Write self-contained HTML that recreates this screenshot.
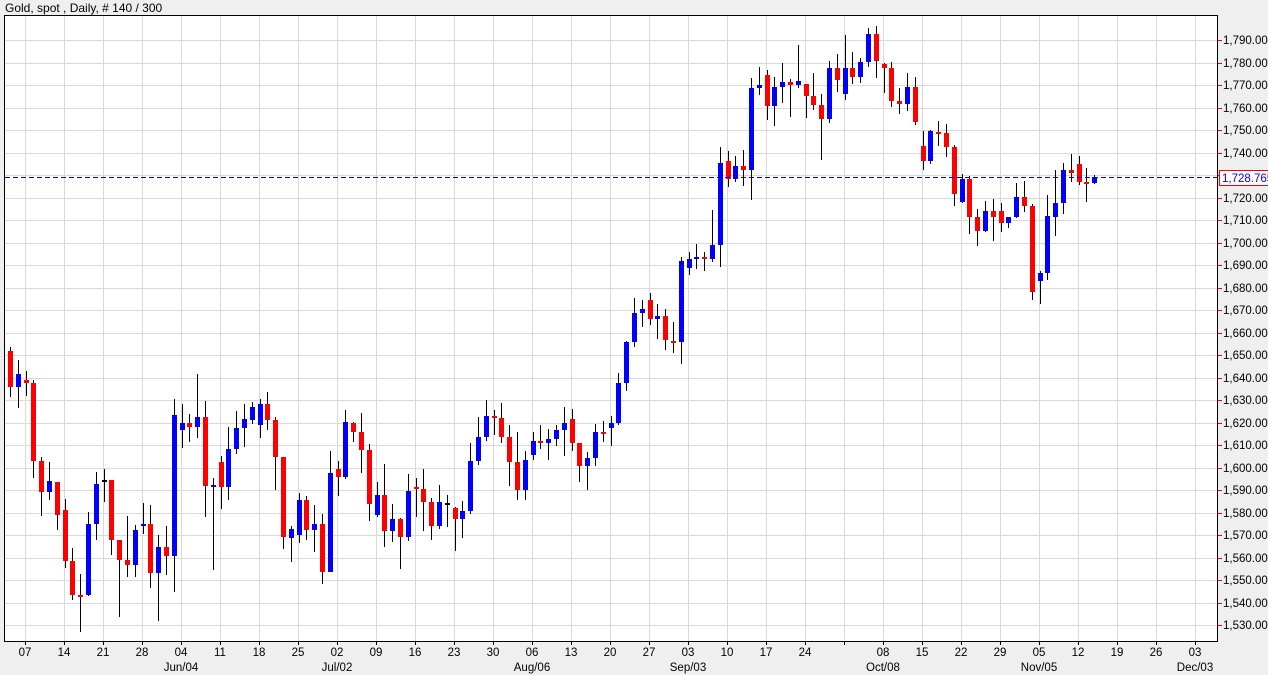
<!DOCTYPE html>
<html><head><meta charset="utf-8"><style>
html,body{margin:0;padding:0;background:#efefef;width:1268px;height:675px;overflow:hidden;font-family:"Liberation Sans",sans-serif}
svg{position:absolute;left:0;top:0}
</style></head><body>
<svg id="s" width="1268" height="675" xmlns="http://www.w3.org/2000/svg" font-family="Liberation Sans, sans-serif">
<rect x="0" y="0" width="1268" height="675" fill="#efefef"/>
<rect x="4.5" y="15.5" width="1213" height="626" fill="#fff" stroke="#000"/>
<g id="grid" stroke="#d9d9d9" stroke-width="1"></g>
<g id="c"></g>
<line x1="5" y1="177.5" x2="1217" y2="177.5" stroke="#0000ff" stroke-dasharray="5,3"/>
<g id="ax" font-size="11.5"></g>
<text x="5" y="12" font-size="12" fill="#000">Gold, spot , Daily, # 140 / 300</text>
<rect x="1219.5" y="170.5" width="50" height="15" fill="#fff" stroke="#f00"/>
<text x="1222" y="182" font-size="11.5" fill="#0000ff">1,728.765</text>
</svg>
<script>
var NS="http://www.w3.org/2000/svg";
function el(p,t,a,txt){var e=document.createElementNS(NS,t);for(var k in a)e.setAttribute(k,a[k]);if(txt)e.textContent=txt;p.appendChild(e);return e;}
var g=document.getElementById('grid'),ax=document.getElementById('ax'),c=document.getElementById('c');
for(var i=0;i<27;i++){var y=40+i*22.5;var yy=Math.round(y)+0.5;
el(g,'line',{x1:5,x2:1217,y1:yy,y2:yy});
el(ax,'line',{x1:1218,x2:1222,y1:yy,y2:yy,stroke:'#f00'});
var v=1790-i*10;el(ax,'text',{x:1223,y:Math.round(y)+4,fill:'#000'},'1,'+String(v).slice(1)+'.000');}
var days=['07','14','21','28','04','11','18','25','02','09','16','23','30','06','13','20','27','03','10','17','24','','08','15','22','29','05','12','19','26','03'];
var mon={4:'Jun/04',8:'Jul/02',13:'Aug/06',17:'Sep/03',22:'Oct/08',26:'Nov/05',30:'Dec/03'};
for(var k=0;k<31;k++){var x=25+k*39;var xx=Math.round(x)+0.5;
if(x<1217)el(g,'line',{x1:xx,x2:xx,y1:16,y2:641});
el(ax,'line',{x1:xx,x2:xx,y1:642,y2:645,stroke:'#000'});
if(days[k])el(ax,'text',{x:x,y:656,'text-anchor':'middle',fill:'#000'},days[k]);
if(mon[k])el(ax,'text',{x:x,y:671,'text-anchor':'middle',fill:'#000'},mon[k]);}
// [color, wickTop, bodyTop, bodyBottom, wickBottom]
var d=[
['r',347,351,387,397],['b',360,374,387,408],['r',371,380,383,396],['r',380,383,461,478],['r',457,461,492,516],['b',462,481,492,500],['r',482,482,515,530],['r',499,510,561,568],['r',548,561,595,600],['r',574,595,596,632],
['b',512,524,595,596],['b',472,484,524,540],['k',469,480,480,502],['r',480,480,540,555],['r',540,540,560,617],['r',516,560,565,577],['b',525,530,565,577],['b',503,524,526,534],['r',505,524,573,588],['b',535,547,573,621],
['r',526,547,556,575],['b',399,415,556,592],['b',404,423,430,448],['r',414,423,427,442],['b',374,417,427,438],['r',401,417,486,517],['b',478,485,486,570],['r',456,462,487,509],['b',427,449,487,500],['b',411,428,449,454],
['b',404,419,428,447],['b',402,407,420,424],['b',399,404,425,438],['r',392,404,420,430],['r',417,420,457,490],['r',457,457,537,549],['b',526,529,538,562],['b',493,500,535,543],['r',496,500,530,540],['b',505,524,530,552],
['r',514,524,572,584],['b',451,473,572,572],['r',461,469,477,496],['b',410,422,477,479],['r',422,423,432,442],['r',413,432,450,473],['r',444,450,504,521],['b',482,495,515,517],['r',464,495,531,547],['b',504,519,531,542],
['r',518,519,537,569],['b',474,491,537,541],['r',478,487,489,517],['r',469,489,502,531],['r',498,502,526,540],['b',485,502,526,529],['k',495,503,503,527],['r',507,508,519,551],['b',501,511,519,538],['b',443,461,511,514],
['b',417,437,461,465],['b',400,416,437,441],['r',410,416,418,435],['r',403,418,437,443],['r',425,437,462,486],['r',432,462,490,500],['b',451,460,490,500],['b',432,441,455,460],['r',425,441,442,449],['b',429,439,443,460],
['b',425,430,439,446],['b',407,423,430,456],['r',409,419,443,451],['r',443,443,466,482],['b',452,458,466,490],['b',424,432,458,466],['r',421,432,433,442],['b',416,423,428,446],['b',373,383,423,425],['b',341,342,383,391],
['b',298,313,342,347],['b',300,309,313,327],['r',293,300,319,325],['b',304,316,319,339],['r',309,316,340,350],['r',322,341,342,353],['b',257,261,342,364],['b',252,259,268,275],['b',244,257,259,269],['r',252,257,259,271],
['b',210,245,259,262],['b',147,163,245,267],['r',151,161,179,187],['b',156,166,179,182],['r',150,166,170,186],['b',78,88,170,200],['b',67,85,88,95],['r',70,75,106,120],['b',77,87,106,126],['b',63,82,87,103],
['r',79,82,85,117],['b',45,81,85,88],['r',84,84,96,118],['r',73,96,105,110],['r',94,105,119,160],['b',61,68,119,123],['r',54,68,80,92],['b',35,68,94,100],['r',52,68,77,84],['b',58,62,77,83],
['b',28,34,62,67],['r',26,34,61,78],['r',63,64,68,93],['r',62,68,101,107],['r',88,101,104,114],['b',73,87,104,111],['r',77,87,122,125],['r',131,146,161,170],['b',130,131,161,164],['r',121,132,133,146],
['r',124,133,147,157],['r',145,147,194,206],['b',174,179,202,203],['r',176,179,217,234],['r',209,217,231,246],['b',201,211,231,232],['r',199,211,217,241],['r',203,211,223,232],['b',217,217,223,228],['b',183,197,217,218],
['r',181,197,206,212],['r',204,206,292,300],['b',271,273,281,304],['b',195,216,273,280],['b',170,203,217,236],['b',163,170,203,214],['r',154,170,173,182],['r',156,164,182,185],['r',168,182,184,202],['b',175,177,183,184]];
var col={r:'#ff0000',b:'#0000ff',k:'#000'};
for(var i=0;i<d.length;i++){var q=d[i];var x=Math.round(10+i*7.8);
el(c,'line',{x1:x+0.5,x2:x+0.5,y1:q[1],y2:q[4],stroke:'#000'});
var h=Math.max(q[3]-q[2],2);
el(c,'rect',{x:x-2,y:q[2],width:5,height:h,fill:col[q[0]]});}
</script>
</body></html>
